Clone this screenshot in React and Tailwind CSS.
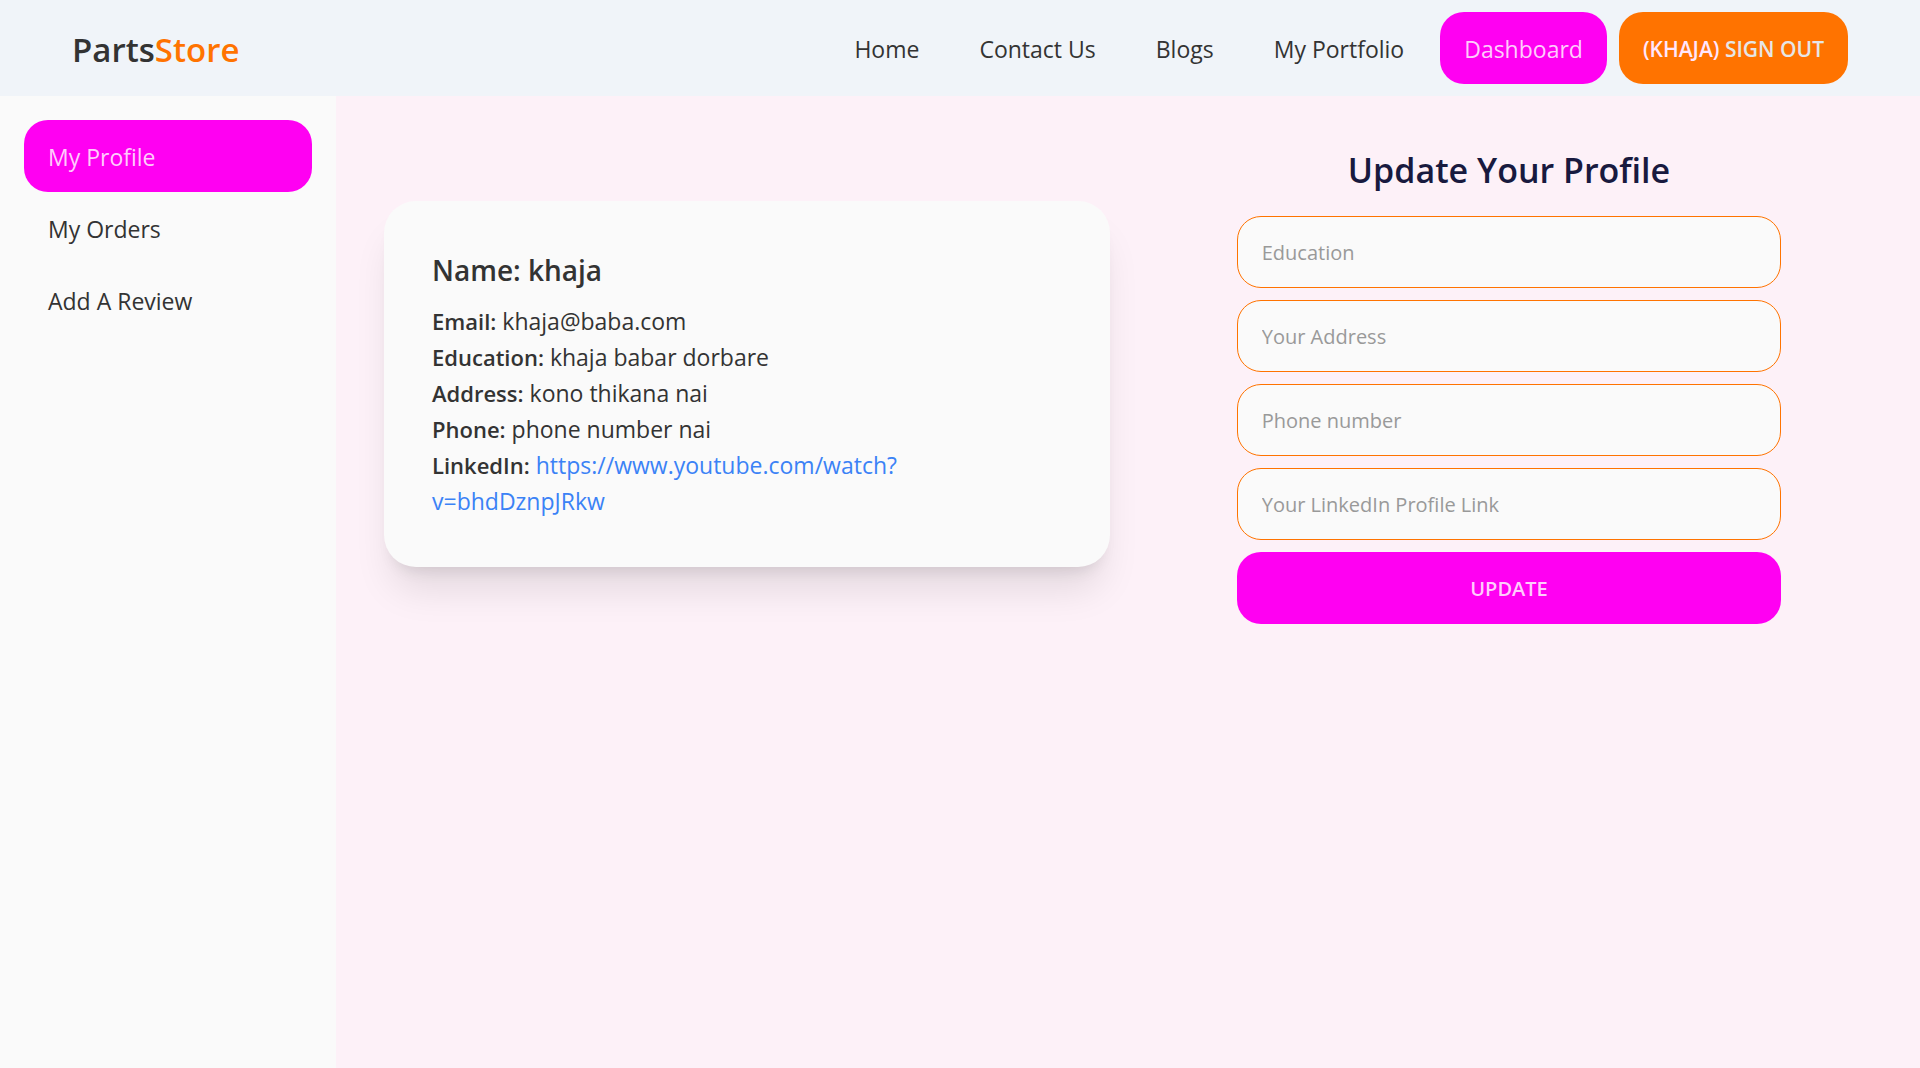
const navLinks = ["Home", "Contact Us", "Blogs", "My Portfolio"];

const sideLinks = [
  { label: "My Profile", active: true },
  { label: "My Orders", active: false },
  { label: "Add A Review", active: false },
];

const details = [
  { label: "Email", value: "khaja@baba.com" },
  { label: "Education", value: "khaja babar dorbare" },
  { label: "Address", value: "kono thikana nai" },
  { label: "Phone", value: "phone number nai" },
];

const fields = [
  { name: "education", type: "text", placeholder: "Education" },
  { name: "address", type: "text", placeholder: "Your Address" },
  { name: "phone", type: "tel", placeholder: "Phone number" },
  { name: "linkedin", type: "url", placeholder: "Your LinkedIn Profile Link" },
];

const profileLink = "https://www.youtube.com/watch?v=bhdDznpJRkw";

function Header() {
  return (
    <header className="flex items-center justify-between bg-[#f0f4f9] px-18 py-3">
      <a href="#" className="pt-1 text-[33px] leading-12 font-semibold">
        Parts<span className="text-[#ff7300]">Store</span>
      </a>
      <nav className="flex items-center gap-3">
        {navLinks.map((label) => (
          <a key={label} href="#" className="px-6 pt-[19px] pb-[17px] leading-9">
            {label}
          </a>
        ))}
        <a href="#" className="rounded-3xl bg-[#ff00f2] px-6 pt-[19px] pb-[17px] leading-9 text-[#ffccfc]">
          Dashboard
        </a>
        <button
          type="button"
          className="rounded-3xl bg-[#ff7300] px-6 pt-[19px] pb-[17px] text-[21px] leading-9 font-semibold text-[#e6e6e6] uppercase"
        >
          <span className="text-[#ffe6fd]">(khaja)</span> Sign out
        </button>
      </nav>
    </header>
  );
}

function Sidebar() {
  return (
    <aside className="w-84 shrink-0 bg-[#fafafa] p-6">
      <ul>
        {sideLinks.map(({ label, active }) => (
          <li key={label}>
            <a
              href="#"
              className={
                active
                  ? "block rounded-3xl bg-[#ff00f2] px-6 pt-[19px] pb-[17px] leading-9 text-[#ffccfc]"
                  : "block rounded-3xl px-6 pt-[19px] pb-[17px] leading-9"
              }
            >
              {label}
            </a>
          </li>
        ))}
      </ul>
    </aside>
  );
}

function ProfileCard() {
  return (
    <section className="rounded-[32px] bg-[#fafafa] p-12 shadow-[0_30px_38px_-8px_rgb(0_0_0/0.1),0_12px_15px_-9px_rgb(0_0_0/0.1)]">
      <h2 className="mb-3 text-[28px] leading-[42px] font-semibold">Name: khaja</h2>
      {details.map(({ label, value }) => (
        <p key={label} className="leading-9">
          <span className="text-[22px] font-semibold">{label}:</span> {value}
        </p>
      ))}
      <p className="leading-9">
        <span className="text-[22px] font-semibold">LinkedIn:</span>{" "}
        <a href={profileLink} className="text-[#3b82f6]">
          {profileLink}
        </a>
      </p>
    </section>
  );
}

function UpdateForm() {
  return (
    <section>
      <h2 className="mb-5 text-center text-[34px] leading-[52px] font-semibold text-[#181a3f]">
        Update Your Profile
      </h2>
      <form className="mx-auto flex w-3/4 flex-col gap-3">
        {fields.map(({ name, type, placeholder }) => (
          <input
            key={name}
            name={name}
            type={type}
            aria-label={placeholder}
            placeholder={placeholder}
            className="h-18 w-full rounded-3xl border border-[#ff7300] bg-[#fafafa] px-6 text-[20px] placeholder:text-[#999999]"
          />
        ))}
        <button
          type="button"
          className="rounded-3xl bg-[#ff00f2] px-6 pt-[19px] pb-[17px] text-[20px] leading-9 font-semibold text-[#ffccfc] uppercase"
        >
          Update
        </button>
      </form>
    </section>
  );
}

export default function App() {
  return (
    <div className="flex min-h-screen flex-col bg-[#fdf1f8] font-['Open_Sans',sans-serif] text-[23px] text-[#333333]">
      <Header />
      <div className="flex grow">
        <Sidebar />
        <main className="grid grow grid-cols-2 items-center gap-9 self-start p-12">
          <ProfileCard />
          <UpdateForm />
        </main>
      </div>
    </div>
  );
}
